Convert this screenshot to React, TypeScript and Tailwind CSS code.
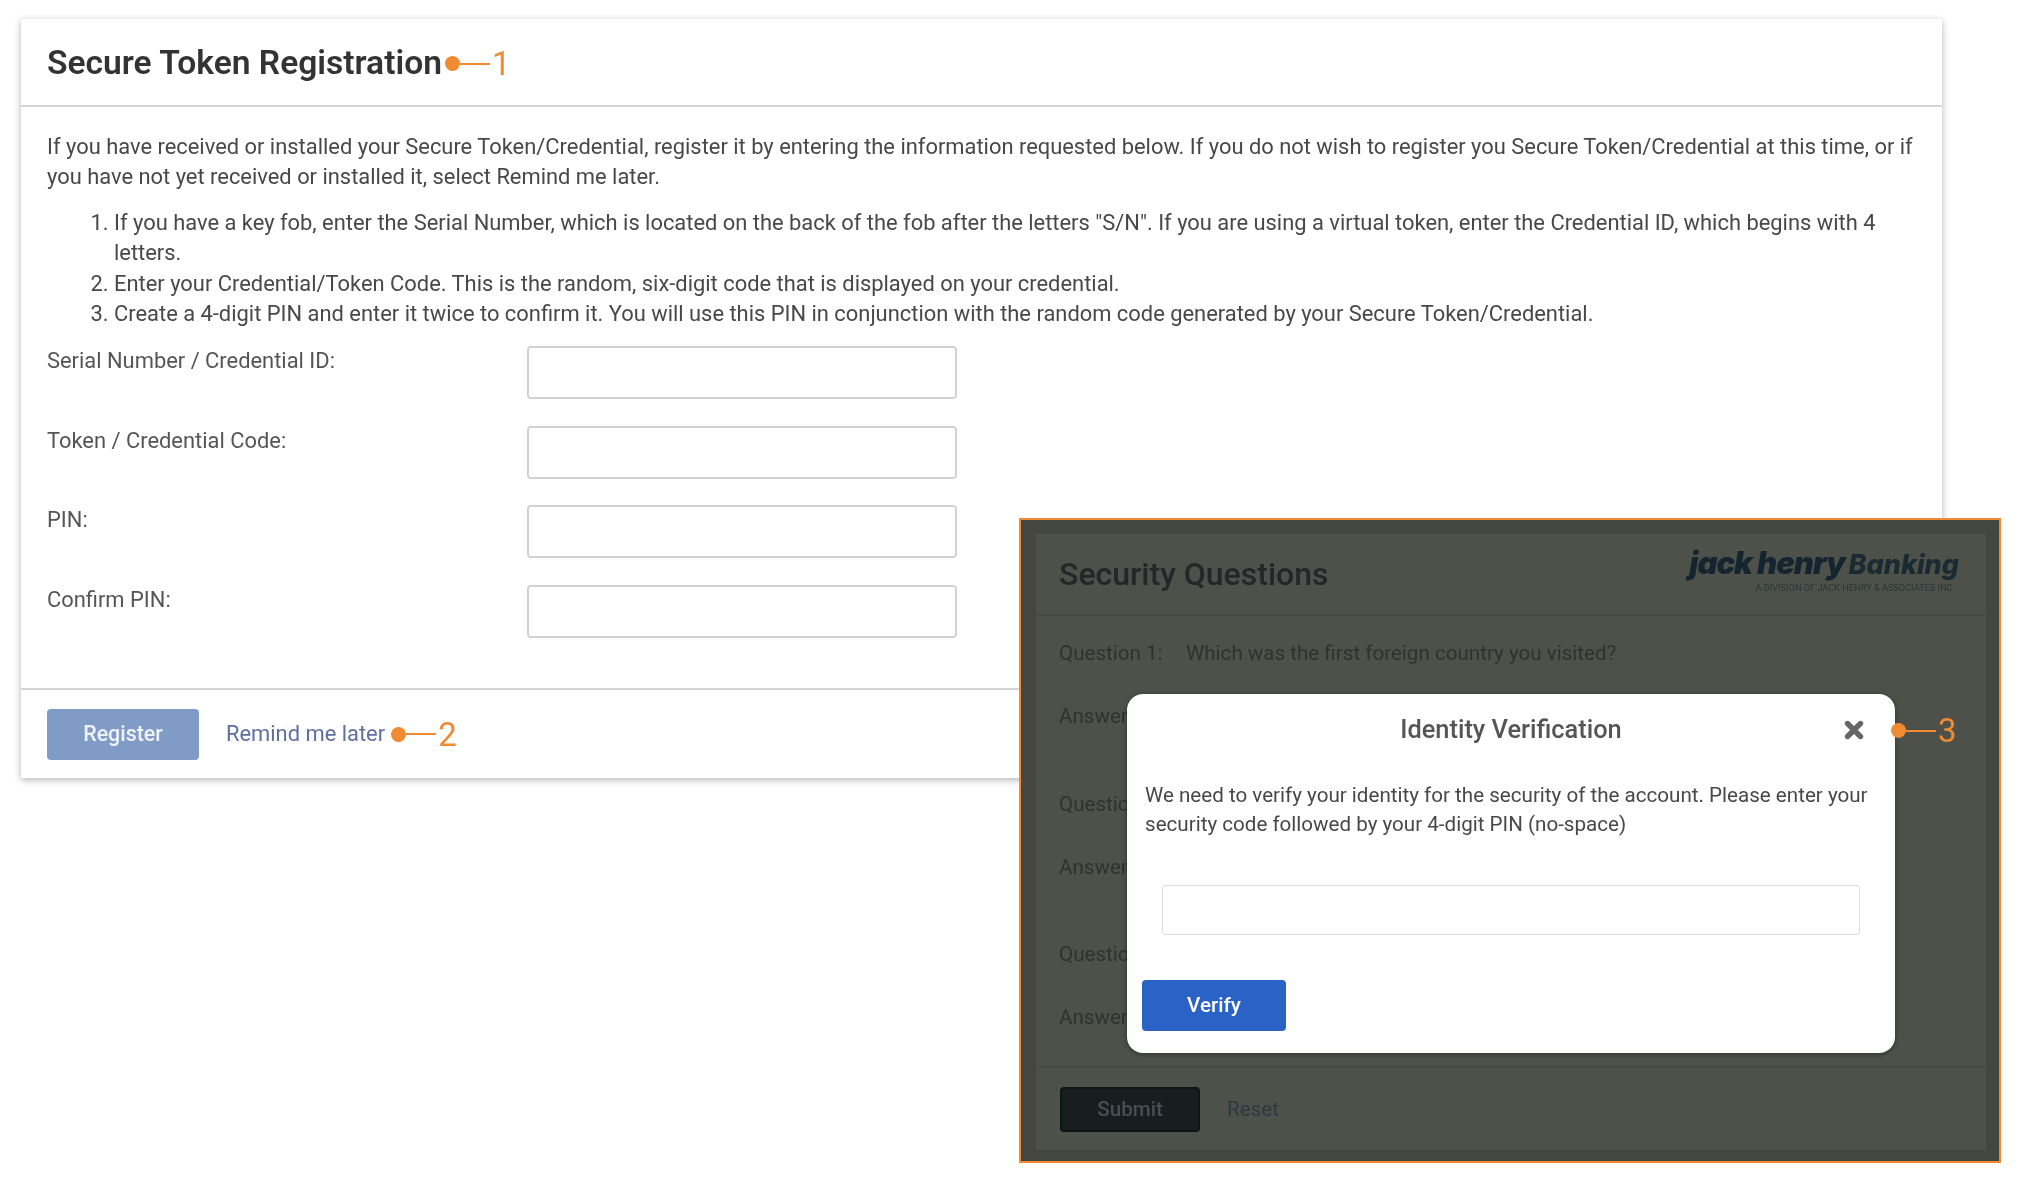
import React from 'react';
import { X } from 'lucide-react';

const FIELDS = ['Serial Number / Credential ID:', 'Token / Credential Code:', 'PIN:', 'Confirm PIN:'];
const QUESTIONS = ['Question 1:', 'Question 2:', 'Question 3:'];

const Callout = ({ n }: { n: number }) => (
  <span className="inline-flex items-center text-[#f08a33]">
    <span className="h-[15px] w-[15px] rounded-full bg-[#f08a33]" />
    <span className="h-[2px] w-[30px] bg-[#f08a33]" />
    <span className="ml-[2px] text-[33px] leading-none font-normal">{n}</span>
  </span>
);

const TokenCard = () => (
  <div className="ml-[21px] w-[1921px] h-[759px] flex flex-col bg-white shadow-[0_2px_7px_rgba(0,0,0,0.3)]">
    <div className="h-[88px] shrink-0 flex items-center gap-[3px] px-[26px] pt-[3px] border-b-2 border-[#d4d4d4]">
      <h1 className="text-[33.6px] font-semibold text-[#333]">Secure Token Registration</h1>
      <Callout n={1} />
    </div>
    <div className="flex-1 px-[26px] pt-[25px] text-[21.9px] leading-[30.4px] text-[#484848]">
      <p>
        If you have received or installed your Secure Token/Credential, register it by entering the information requested below. If you do not wish to register you Secure Token/Credential at this time, or if you have not yet received or installed it, select Remind me later.
      </p>
      <ol className="list-decimal pl-[67px] mt-[15px] pr-[30px]">
        <li>If you have a key fob, enter the Serial Number, which is located on the back of the fob after the letters "S/N". If you are using a virtual token, enter the Credential ID, which begins with 4 letters.</li>
        <li>Enter your Credential/Token Code. This is the random, six-digit code that is displayed on your credential.</li>
        <li>Create a 4-digit PIN and enter it twice to confirm it. You will use this PIN in conjunction with the random code generated by your Secure Token/Credential.</li>
      </ol>
      <div className="mt-[17px] flex flex-col gap-[26.5px]">
        {FIELDS.map(label => (
          <div key={label} className="flex">
            <label className="w-[480px] pt-[1px] leading-[28px] text-[#555]">{label}</label>
            <input className="w-[430px] h-[53px] rounded-[4px] border-2 border-[#d2d2d2] bg-white" />
          </div>
        ))}
      </div>
    </div>
    <div className="h-[90px] shrink-0 flex items-center px-[26px] border-t-2 border-[#d4d4d4] text-[21.9px]">
      <button className="w-[152px] h-[51px] rounded-[4px] bg-[#7f9bc6] text-[#eef2f8] font-medium text-[21.4px]">Register</button>
      <a className="ml-[27px] mr-[6px] text-[#5f6f9f]">Remind me later</a>
      <Callout n={2} />
    </div>
  </div>
);

const SecurityPanel = () => (
  <div className="absolute left-[1019px] top-[518px] w-[982px] h-[645px] border-2 border-[#f08a33] bg-[#43473f] pt-[14px] pl-[15px] pr-[13px] pb-[11px]">
    <div className="relative h-full flex flex-col bg-[#4d514a] text-[20.6px] text-[#2f3330]">
      <div className="h-[82px] shrink-0 flex items-center justify-between pl-[23px] pr-[24px] border-b-2 border-[#454943]">
        <h2 className="text-[32px] font-medium text-[#23272a]">Security Questions</h2>
        <div className="flex flex-col items-end mr-[3px] mb-[8px]">
          <div className="leading-[30px] italic font-black text-[#15252f] whitespace-nowrap font-['Inter',sans-serif]">
            <span className="text-[31px] tracking-[-1px]">jack henry</span>
            <span className="text-[27px] font-extrabold text-[#1a2a33] ml-[4px]">Banking</span>
          </div>
          <div className="text-[9.2px] leading-[11px] text-[#2a343a] mr-[4px] whitespace-nowrap">A DIVISION OF JACK HENRY &amp; ASSOCIATES INC.</div>
        </div>
      </div>
      <div className="flex-1 min-h-0 overflow-hidden pl-[23px] pr-[24px] pt-[22px]">
        {QUESTIONS.map((q, i) => (
          <div key={q} className="h-[150.5px]">
            <div className="flex leading-[30px]">
              <span className="w-[127px]">{q}</span>
              {i === 0 && <span>Which was the first foreign country you visited?</span>}
            </div>
            <div className="mt-[33px] leading-[30px]">Answer:</div>
          </div>
        ))}
      </div>
      <div className="h-[84px] shrink-0 flex items-center px-[24px] border-t-2 border-[#454943]">
        <button className="w-[140px] h-[45px] rounded-[4px] border-2 border-[#0f1415] bg-[#161e20] text-[#465052] font-medium">Submit</button>
        <a className="ml-[27px] text-[#2b3a42]">Reset</a>
      </div>
    </div>
    <IdentityModal />
  </div>
);

const IdentityModal = () => (
  <div className="absolute left-[106px] top-[174px] w-[768px] h-[359px] rounded-[16px] bg-white shadow-[0_1px_5px_rgba(0,0,0,0.4)] px-[18px] text-[20.6px] leading-[28.5px] text-[#484848]">
    <div className="relative pt-[20px] text-center text-[25.4px] leading-[30px] font-medium text-[#555]">
      Identity Verification
      <X className="absolute right-[10px] top-[23px] w-[26px] h-[26px] text-[#666]" strokeWidth={5} />
      <span className="absolute left-[746px] top-[20px]">
        <Callout n={3} />
      </span>
    </div>
    <p className="mt-[37px]">
      We need to verify your identity for the security of the account. Please enter your security code followed by your 4-digit PIN (no-space)
    </p>
    <input className="block mt-[47px] ml-[17px] w-[698px] h-[50px] rounded-[3px] border border-[#ddd] bg-white" />
    <button className="block mt-[45px] ml-[-3px] w-[144px] h-[51px] rounded-[4px] bg-[#2a62c6] text-white font-medium">Verify</button>
  </div>
);

const App = () => (
  <div className="relative h-[1186px] overflow-hidden bg-white pt-[19px] blur-[0.4px] font-['Roboto',sans-serif]">
    <TokenCard />
    <SecurityPanel />
  </div>
);

export default App;
